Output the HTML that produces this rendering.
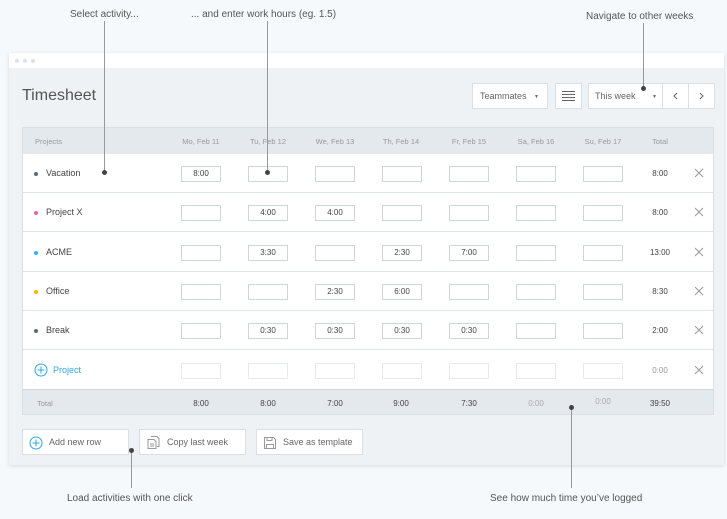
<!DOCTYPE html>
<html><head><meta charset="utf-8"><style>
*{box-sizing:border-box;margin:0;padding:0}
body{width:727px;height:519px;background:#f5f9fc;font-family:"Liberation Sans",sans-serif;position:relative;overflow:hidden;color:#333}
.a{position:absolute}
.lbl{font-size:10px;color:#555;white-space:nowrap}
.vl{position:absolute;width:1px;background:#999}
.dot{position:absolute;width:5px;height:5px;border-radius:50%;background:#444}
.win{left:9px;top:53px;width:715px;height:412px;background:#eef2f5;box-shadow:0 1px 4px rgba(0,0,0,.12)}
.tb{left:0;top:0;width:715px;height:15px;background:#fff}
.tb i{position:absolute;top:6px;width:4px;height:4px;border-radius:50%;background:#dde2e6}
.tbl{left:22px;top:127px;width:692px;height:288px;background:#fff;border:1px solid #d9dfe3}
.hd{background:#e4e9ed;height:26px;left:0;top:0;width:690px}
.hd span{position:absolute;top:9px;font-size:7.5px;color:#999;transform:translateX(-50%)}
.row{left:0;width:690px;height:39px;border-bottom:1px solid #dfe4e8}
.in{position:absolute;top:12px;width:40px;height:16px;border:1px solid #cfd6db;font-size:8px;text-align:center;line-height:14px;color:#444;background:#fff}
.in.f{border-color:#e6eaed}
.nm{position:absolute;left:23px;top:14px;font-size:9px;color:#444}
.cd{position:absolute;left:11px;top:18px;width:4px;height:4px;border-radius:50%}
.tt{position:absolute;top:15px;font-size:8px;transform:translateX(-50%);color:#444}
.x{position:absolute;left:671px;top:14px}
.btn{position:absolute;background:#fff;border:1px solid #d9dfe3;font-size:9px;color:#666}
</style></head><body>
<div class="a lbl" style="left:70px;top:9px">Select activity...</div>
<div class="a lbl" style="left:191px;top:9px">... and enter work hours (eg. 1.5)</div>
<div class="a lbl" style="left:586px;top:11px">Navigate to other weeks</div>
<div class="a lbl" style="left:67px;top:493px">Load activities with one click</div>
<div class="a lbl" style="left:490px;top:493px">See how much time you’ve logged</div>

<div class="a win">
 <div class="a tb"><i style="left:6px"></i><i style="left:14px"></i><i style="left:22px"></i></div>
 <div class="a" style="left:13px;top:34px;font-size:16px;color:#555">Timesheet</div>
 <div class="btn" style="left:463px;top:30px;width:76px;height:26px;line-height:24px;padding-left:7px">Teammates <span style="font-size:5px;margin-left:5px;vertical-align:1px">▼</span></div>
 <div class="btn" style="left:546px;top:30px;width:27px;height:26px">
  <svg width="25" height="24" viewBox="0 0 25 24"><g stroke="#666" stroke-width="1"><path d="M6 7.5h13M6 10.5h13M6 13.5h13M6 16.5h13"/></g></svg></div>
 <div class="btn" style="left:579px;top:30px;width:75px;height:26px;line-height:24px;padding-left:6px">This week <span style="font-size:5px;margin-left:14px;vertical-align:1px">▼</span></div>
 <div class="btn" style="left:653px;top:30px;width:27px;height:26px"><svg width="25" height="24"><path d="M14 9l-3 3 3 3" fill="none" stroke="#666"/></svg></div>
 <div class="btn" style="left:679px;top:30px;width:27px;height:26px"><svg width="25" height="24"><path d="M11 9l3 3-3 3" fill="none" stroke="#666"/></svg></div>
</div>

<div class="a tbl">
 <div class="a hd">
  <span style="left:12px;transform:none">Projects</span>
  <span style="left:178px">Mo, Feb 11</span><span style="left:245px">Tu, Feb 12</span><span style="left:312px">We, Feb 13</span><span style="left:378px">Th, Feb 14</span><span style="left:446px">Fr, Feb 15</span><span style="left:513px">Sa, Feb 16</span><span style="left:580px">Su, Feb 17</span><span style="left:637px">Total</span>
 </div>
 <div class="a row" style="top:26px"><i class="cd" style="background:#5a6b78"></i><span class="nm">Vacation</span>
  <div class="in" style="left:158px">8:00</div><div class="in" style="left:225px"></div><div class="in" style="left:292px"></div><div class="in" style="left:359px"></div><div class="in" style="left:426px"></div><div class="in" style="left:493px"></div><div class="in" style="left:560px"></div><span class="tt" style="left:637px">8:00</span><svg class="x" width="10" height="10"><path d="M1 1l8 8M9 1l-8 8" stroke="#999"/></svg></div>
 <div class="a row" style="top:65px"><i class="cd" style="background:#f06292"></i><span class="nm">Project X</span>
  <div class="in" style="left:158px"></div><div class="in" style="left:225px">4:00</div><div class="in" style="left:292px">4:00</div><div class="in" style="left:359px"></div><div class="in" style="left:426px"></div><div class="in" style="left:493px"></div><div class="in" style="left:560px"></div><span class="tt" style="left:637px">8:00</span><svg class="x" width="10" height="10"><path d="M1 1l8 8M9 1l-8 8" stroke="#999"/></svg></div>
 <div class="a row" style="top:105px"><i class="cd" style="background:#29b6f6"></i><span class="nm">ACME</span>
  <div class="in" style="left:158px"></div><div class="in" style="left:225px">3:30</div><div class="in" style="left:292px"></div><div class="in" style="left:359px">2:30</div><div class="in" style="left:426px">7:00</div><div class="in" style="left:493px"></div><div class="in" style="left:560px"></div><span class="tt" style="left:637px">13:00</span><svg class="x" width="10" height="10"><path d="M1 1l8 8M9 1l-8 8" stroke="#999"/></svg></div>
 <div class="a row" style="top:144px"><i class="cd" style="background:#ffb300"></i><span class="nm">Office</span>
  <div class="in" style="left:158px"></div><div class="in" style="left:225px"></div><div class="in" style="left:292px">2:30</div><div class="in" style="left:359px">6:00</div><div class="in" style="left:426px"></div><div class="in" style="left:493px"></div><div class="in" style="left:560px"></div><span class="tt" style="left:637px">8:30</span><svg class="x" width="10" height="10"><path d="M1 1l8 8M9 1l-8 8" stroke="#999"/></svg></div>
 <div class="a row" style="top:183px"><i class="cd" style="background:#5a6b78"></i><span class="nm">Break</span>
  <div class="in" style="left:158px"></div><div class="in" style="left:225px">0:30</div><div class="in" style="left:292px">0:30</div><div class="in" style="left:359px">0:30</div><div class="in" style="left:426px">0:30</div><div class="in" style="left:493px"></div><div class="in" style="left:560px"></div><span class="tt" style="left:637px">2:00</span><svg class="x" width="10" height="10"><path d="M1 1l8 8M9 1l-8 8" stroke="#999"/></svg></div>
 <div class="a row" style="top:223px;border-bottom:1px solid #cfd6db">
  <svg class="a" style="left:11px;top:12px" width="14" height="14"><circle cx="7" cy="7" r="6" fill="none" stroke="#29a9e8" stroke-width="1"/><path d="M7 3.5v7M3.5 7h7" stroke="#29a9e8"/></svg>
  <span class="nm" style="left:30px;color:#29a9e8">Project</span>
  <div class="in f" style="left:158px"></div><div class="in f" style="left:225px"></div><div class="in f" style="left:292px"></div><div class="in f" style="left:359px"></div><div class="in f" style="left:426px"></div><div class="in f" style="left:493px"></div><div class="in f" style="left:560px"></div><span class="tt" style="left:637px;color:#999">0:00</span><svg class="x" width="10" height="10"><path d="M1 1l8 8M9 1l-8 8" stroke="#999"/></svg></div>
 <div class="a" style="top:262px;left:0;width:690px;height:24px;background:#e4e9ed;font-size:8px">
  <span class="a" style="left:14px;top:9px;color:#999;font-size:7.5px">Total</span>
  <span class="tt" style="left:178px;top:9px">8:00</span><span class="tt" style="left:245px;top:9px">8:00</span><span class="tt" style="left:312px;top:9px">7:00</span><span class="tt" style="left:378px;top:9px">9:00</span><span class="tt" style="left:446px;top:9px">7:30</span><span class="tt" style="left:513px;top:9px;color:#aaa">0:00</span><span class="tt" style="left:580px;top:7px;color:#aaa">0:00</span><span class="tt" style="left:637px;top:9px">39:50</span>
 </div>
</div>

<div class="btn" style="left:22px;top:429px;width:107px;height:26px">
 <svg class="a" style="left:6px;top:6px" width="14" height="14"><circle cx="7" cy="7" r="6" fill="none" stroke="#29a9e8"/><path d="M7 3.5v7M3.5 7h7" stroke="#29a9e8"/></svg>
 <span class="a" style="left:26px;top:7px">Add new row</span></div>
<div class="btn" style="left:139px;top:429px;width:107px;height:26px">
 <svg class="a" style="left:6px;top:5px" width="14" height="15"><path d="M5 1.5h6l2 2v8h-2M2 4.5h6l2 2v7H2z" fill="none" stroke="#999"/><path d="M4 9h4M4 11h4" stroke="#999"/></svg>
 <span class="a" style="left:27px;top:7px">Copy last week</span></div>
<div class="btn" style="left:256px;top:429px;width:107px;height:26px">
 <svg class="a" style="left:6px;top:6px" width="14" height="14"><path d="M1.5 1.5h9l2 2v9h-11z" fill="none" stroke="#999"/><path d="M4 1.5v3h5v-3M3.5 12.5v-4h7v4" fill="none" stroke="#999"/></svg>
 <span class="a" style="left:26px;top:7px">Save as template</span></div>

<div class="vl" style="left:104px;top:21px;height:150px"></div><div class="dot" style="left:102px;top:170px"></div>
<div class="vl" style="left:267px;top:21px;height:151px"></div><div class="dot" style="left:265px;top:170px"></div>
<div class="vl" style="left:643px;top:23px;height:65px"></div><div class="dot" style="left:641px;top:86px"></div>
<div class="vl" style="left:131px;top:450px;height:38px"></div><div class="dot" style="left:129px;top:448px"></div>
<div class="vl" style="left:571px;top:408px;height:80px"></div><div class="dot" style="left:569px;top:405px"></div>
</body></html>
